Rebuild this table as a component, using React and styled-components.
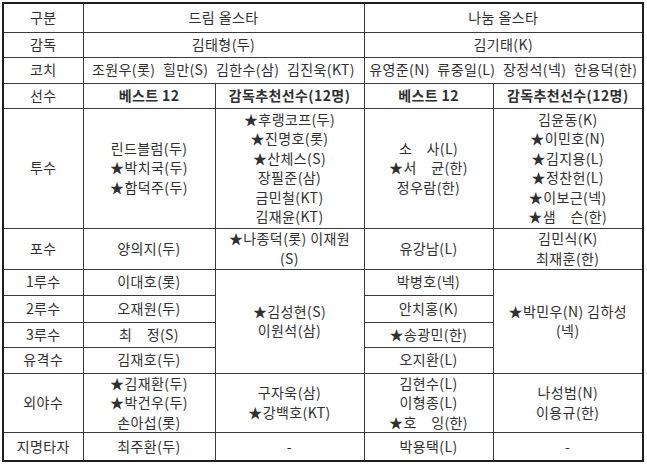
import React from 'react'
import styled, { createGlobalStyle } from 'styled-components'

const GlobalStyle = createGlobalStyle`
  html, body {
    margin: 0;
    padding: 0;
    background: #ffffff;
  }
  body {
    font-family: "Noto Sans CJK KR", "Noto Sans", sans-serif;
    color: #303030;
  }
`

const Page = styled.div`
  width: 647px;
  height: 464px;
  padding: 2px 0 0 2px;
  box-sizing: border-box;
`

const Table = styled.table`
  border-collapse: collapse;
  table-layout: fixed;
  width: 641px;
  border: 2px solid #1e1e1e;
  font-size: 14px;
  letter-spacing: 0.4px;
`

const Row = styled.tr`
  height: ${(p) => p.$h}px;
`

const Cell = styled.td`
  border: 1px solid #3a3a3a;
  padding: 0;
  text-align: center;
  vertical-align: middle;
  line-height: 19.5px;
  white-space: nowrap;
  font-weight: ${(p) => (p.$bold ? 700 : 400)};
  word-spacing: ${(p) => (p.$spread ? '4px' : 'normal')};
`

const Line = styled.div`
  white-space: pre;
`

const Names = ({ list }) => list.map((n, i) => <Line key={i}>{n}</Line>)

function App() {
  return (
    <Page>
      <GlobalStyle />
      <Table>
        <colgroup>
          <col style={{ width: 80 }} />
          <col style={{ width: 132 }} />
          <col style={{ width: 149 }} />
          <col style={{ width: 129 }} />
          <col style={{ width: 150 }} />
        </colgroup>
        <tbody>
          <Row $h={29}>
            <Cell>구분</Cell>
            <Cell colSpan={2}>드림 올스타</Cell>
            <Cell colSpan={2}>나눔 올스타</Cell>
          </Row>
          <Row $h={25}>
            <Cell>감독</Cell>
            <Cell colSpan={2}>김태형(두)</Cell>
            <Cell colSpan={2}>김기태(K)</Cell>
          </Row>
          <Row $h={26}>
            <Cell>코치</Cell>
            <Cell colSpan={2} $spread>조원우(롯) 힐만(S) 김한수(삼) 김진욱(KT)</Cell>
            <Cell colSpan={2} $spread>유영준(N) 류중일(L) 장정석(넥) 한용덕(한)</Cell>
          </Row>
          <Row $h={25}>
            <Cell>선수</Cell>
            <Cell $bold>베스트 12</Cell>
            <Cell $bold>감독추천선수(12명)</Cell>
            <Cell $bold>베스트 12</Cell>
            <Cell $bold>감독추천선수(12명)</Cell>
          </Row>
          <Row $h={120}>
            <Cell>투수</Cell>
            <Cell><Names list={['린드블럼(두)', '★박치국(두)', '★함덕주(두)']} /></Cell>
            <Cell>
              <Names list={['★후랭코프(두)', '★진명호(롯)', '★산체스(S)', '장필준(삼)', '금민철(KT)', '김재윤(KT)']} />
            </Cell>
            <Cell><Names list={['소\u3000사(L)', '★서\u3000균(한)', '정우람(한)']} /></Cell>
            <Cell>
              <Names list={['김윤동(K)', '★이민호(N)', '★김지용(L)', '★정찬헌(L)', '★이보근(넥)', '★샘\u3000슨(한)']} />
            </Cell>
          </Row>
          <Row $h={41}>
            <Cell>포수</Cell>
            <Cell>양의지(두)</Cell>
            <Cell><Names list={['★나종덕(롯) 이재원', '(S)']} /></Cell>
            <Cell>유강남(L)</Cell>
            <Cell><Names list={['김민식(K)', '최재훈(한)']} /></Cell>
          </Row>
          <Row $h={26}>
            <Cell>1루수</Cell>
            <Cell>이대호(롯)</Cell>
            <Cell rowSpan={4}><Names list={['★김성현(S)', '이원석(삼)']} /></Cell>
            <Cell>박병호(넥)</Cell>
            <Cell rowSpan={4}><Names list={['★박민우(N) 김하성', '(넥)']} /></Cell>
          </Row>
          <Row $h={27}>
            <Cell>2루수</Cell>
            <Cell>오재원(두)</Cell>
            <Cell>안치홍(K)</Cell>
          </Row>
          <Row $h={25}>
            <Cell>3루수</Cell>
            <Cell>최{'\u3000'}정(S)</Cell>
            <Cell>★송광민(한)</Cell>
          </Row>
          <Row $h={26}>
            <Cell>유격수</Cell>
            <Cell>김재호(두)</Cell>
            <Cell>오지환(L)</Cell>
          </Row>
          <Row $h={59}>
            <Cell>외야수</Cell>
            <Cell><Names list={['★김재환(두)', '★박건우(두)', '손아섭(롯)']} /></Cell>
            <Cell><Names list={['구자욱(삼)', '★강백호(KT)']} /></Cell>
            <Cell><Names list={['김현수(L)', '이형종(L)', '★호\u3000잉(한)']} /></Cell>
            <Cell><Names list={['나성범(N)', '이용규(한)']} /></Cell>
          </Row>
          <Row $h={28}>
            <Cell>지명타자</Cell>
            <Cell>최주환(두)</Cell>
            <Cell>-</Cell>
            <Cell>박용택(L)</Cell>
            <Cell>-</Cell>
          </Row>
        </tbody>
      </Table>
    </Page>
  )
}

export default App
